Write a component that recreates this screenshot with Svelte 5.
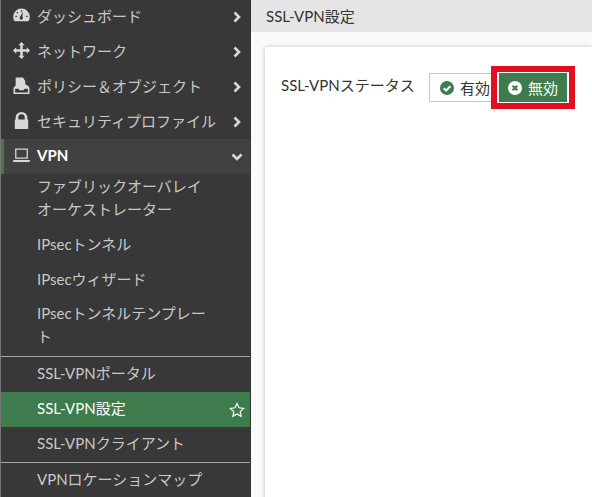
<script>
  const topItems = [
    { label: 'ダッシュボード', icon: 'gauge' },
    { label: 'ネットワーク', icon: 'move' },
    { label: 'ポリシー＆オブジェクト', icon: 'policy' },
    { label: 'セキュリティプロファイル', icon: 'lock' },
  ];
</script>

<div class="page">
  <nav class="sidebar">
    {#each topItems as item}
      <div class="item top">
        <svg class="icon" viewBox="0 0 16 16">
          {#if item.icon === 'gauge'}
            <path fill-rule="evenodd" d="M8 1.500A7.800 7.800 0 0 0 .2 9.300c0 1.800.6 3.200 1.500 4.200h12.600c.9-1 1.500-2.400 1.500-4.200A7.800 7.800 0 0 0 8 1.500zM8 12a1.800 1.800 0 0 1-1.100-3.200L9.500 4.500 8.800 9A1.800 1.800 0 0 1 8 12zM2.200 8.200h1.500v1.300H2.200zM12.300 8.200h1.500v1.300h-1.500zM4 4.500l1 1-.9.900-1-1zM7.400 3h1.200v1.400H7.400z"/>
          {:else if item.icon === 'move'}
            <path d="M8 0l3 3H9.200v3.800H13V5l3 3-3 3V9.200H9.200V13H11l-3 3-3-3h1.800V9.200H3V11L0 8l3-3v1.800h3.800V3H5z"/>
          {:else if item.icon === 'policy'}
            <path fill-rule="evenodd" d="M2.500 .5H9.500L11.500 4l.2 3 2.800 1.500L15.500 10.500V16H.5V10L2.500 8zM2 11v3.500h12V11h-3L10 12.500H6L5 11z"/>
          {:else}
            <path fill-rule="evenodd" d="M2.500 7V5a5.500 5 0 0 1 11 0v2h.8v9H1.700V7zM5 7h6V5a3 2.800 0 0 0-6 0z"/>
          {/if}
        </svg>
        <span class="label">{item.label}</span>
        <svg class="chev" viewBox="0 0 10 12"><path d="M2.500 1.500L7 6l-4.500 4.500" /></svg>
      </div>
    {/each}

    <div class="item top section">
      <svg class="icon" viewBox="0 0 16 16">
        <path fill-rule="evenodd" d="M2 1.500h12v9.500H2zM3.200 2.700v7.100h9.600V2.700zM0 12.300h16v1l-1 .9H1l-1-.9z"/>
      </svg>
      <span class="label">VPN</span>
      <svg class="chev down" viewBox="0 0 12 10"><path d="M1.500 2.500L6 7l4.500-4.500" /></svg>
    </div>

    <div class="item sub double fabric">ファブリックオーバレイ<br />オーケストレーター</div>
    <div class="item sub">IPsecトンネル</div>
    <div class="item sub">IPsecウィザード</div>
    <div class="item sub double template">IPsecトンネルテンプレー<br />ト</div>
    <div class="rule"></div>
    <div class="item sub low">SSL-VPNポータル</div>
    <div class="item sub low active">
      <span class="label">SSL-VPN設定</span>
      <svg class="star" viewBox="0 0 16 16"><path d="M8 1.500l2 4.300 4.700.6-3.500 3.200.9 4.700L8 12l-4.100 2.300.9-4.700L1.300 6.400 6 5.800z" /></svg>
    </div>
    <div class="item sub low">SSL-VPNクライアント</div>
    <div class="rule"></div>
    <div class="item sub low">VPNロケーションマップ</div>
  </nav>

  <main class="content">
    <header class="title">SSL-VPN設定</header>
    <section class="card">
      <span class="field-label">SSL-VPNステータス</span>
      <div class="toggle">
        <div class="opt on">
          <svg class="state" viewBox="0 0 16 16">
            <circle cx="8" cy="8" r="8" fill="#3f7c4d" />
            <path d="M4.200 8.200l2.800 2.700 4.800-5" fill="none" stroke="#fff" stroke-width="2.400" />
          </svg>
          有効
        </div>
        <div class="highlight">
          <div class="opt off">
            <svg class="state" viewBox="0 0 16 16">
              <circle cx="8" cy="8" r="8" fill="#fff" />
              <path d="M5.300 5.300l5.400 5.400M10.700 5.300l-5.400 5.400" fill="none" stroke="#3f7c4d" stroke-width="2.400" />
            </svg>
            無効
          </div>
        </div>
      </div>
    </section>
  </main>
</div>

<style>
  :global(body) {
    margin: 0;
    background: #fafafa;
  }

  .page {
    display: flex;
    width: 592px;
    height: 497px;
    overflow: hidden;
    font-family: Lato, "Noto Sans CJK JP", sans-serif;
  }

  .sidebar {
    width: 251px;
    flex: none;
    box-sizing: border-box;
    background: #383838;
    color: #c8c8c8;
    font-size: 15px;
    border-left: 1px solid #777;
    border-right: 1px solid #333;
  }

  .item {
    display: flex;
    align-items: center;
    height: 35px;
    box-sizing: border-box;
    padding-bottom: 3px;
    white-space: nowrap;
  }

  .top {
    padding-left: 12px;
    padding-right: 7px;
  }

  .top:first-child {
    height: 34px;
  }

  .icon {
    width: 17px;
    height: 17px;
    flex: none;
    margin-right: 7px;
    fill: #d8d8d8;
  }

  .label {
    flex: 1;
  }

  .chev {
    width: 12px;
    height: 12px;
    margin-top: 3px;
    fill: none;
    stroke: #d8d8d8;
    stroke-width: 2.600;
  }

  .section {
    background: #414141;
    border-left: 3px solid #3f7c4d;
    padding-left: 9px;
    color: #fff;
    font-weight: 700;
  }

  .sub {
    padding-left: 36px;
  }

  .low {
    padding-bottom: 5px;
  }

  .double {
    display: block;
    line-height: 23px;
    padding-bottom: 0;
  }

  .fabric {
    height: 53px;
    padding-top: 1px;
  }

  .template {
    height: 59px;
    padding-top: 5px;
  }

  .rule {
    height: 1px;
    background: #a6a6a6;
  }

  .active {
    background: #3f7c4d;
    color: #fff;
    padding-right: 5px;
  }

  .star {
    width: 16px;
    height: 16px;
    margin-top: 5px;
    fill: none;
    stroke: #fff;
    stroke-width: 1.200;
  }

  .content {
    flex: 1;
    min-width: 0;
  }

  .title {
    height: 32px;
    background: #e5e5e5;
    color: #333;
    font-size: 15px;
    line-height: 32px;
    padding-left: 15px;
  }

  .card {
    display: flex;
    align-items: flex-start;
    margin: 15px 0 0 14px;
    height: 460px;
    background: #fff;
    box-shadow: 0 0 4px rgba(0, 0, 0, 0.25);
    padding: 26px 0 0 16px;
    color: #333;
    font-size: 15px;
  }

  .field-label {
    width: 148px;
    line-height: 24px;
  }

  .toggle {
    display: flex;
    align-items: center;
    position: relative;
  }

  .opt {
    display: flex;
    align-items: center;
    gap: 6px;
    height: 29px;
    box-sizing: border-box;
  }

  .on {
    border: 1px solid #c8c8c8;
    padding: 0 24px 0 10px;
  }

  .highlight {
    position: absolute;
    left: 62px;
    top: -7px;
    border: 6px solid #e0101f;
    padding: 1px 2px;
    background: #fff;
  }

  .off {
    background: #3f7c4d;
    color: #fff;
    padding: 0 9px;
    width: 68px;
    box-sizing: border-box;
  }

  .state {
    width: 14px;
    height: 14px;
    flex: none;
  }
</style>
